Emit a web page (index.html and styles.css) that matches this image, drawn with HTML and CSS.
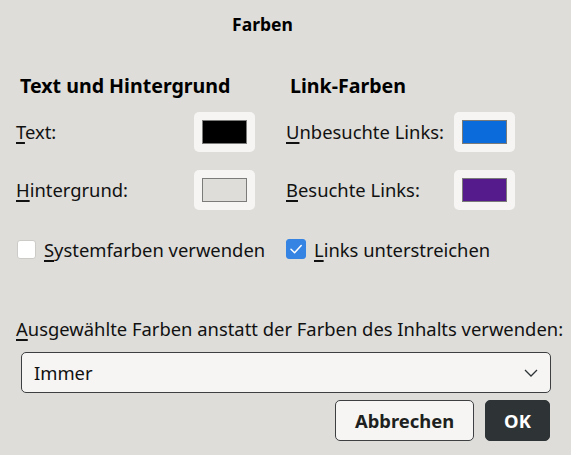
FILE: index.html
```html
<!DOCTYPE html>
<html lang="de">
<head>
<meta charset="utf-8">
<title>Farben</title>
<link rel="stylesheet" href="styles.css">
</head>
<body>
<div class="dialog">
  <header class="titlebar">Farben</header>

  <div class="columns">
    <section class="group group-left">
      <h2 class="group-title">Text und Hintergrund</h2>
      <div class="color-grid">
        <label class="row-label"><span class="mn">T</span>ext:</label>
        <button class="color-btn"><span class="swatch swatch-text"></span></button>
        <label class="row-label"><span class="mn">H</span>intergrund:</label>
        <button class="color-btn"><span class="swatch swatch-bg"></span></button>
      </div>
      <label class="check">
        <span class="check-box"></span>
        <span class="check-label"><span class="mn">S</span>ystemfarben verwenden</span>
      </label>
    </section>

    <section class="group group-right">
      <h2 class="group-title">Link-Farben</h2>
      <div class="color-grid">
        <label class="row-label"><span class="mn">U</span>nbesuchte Links:</label>
        <button class="color-btn"><span class="swatch swatch-link"></span></button>
        <label class="row-label"><span class="mn">B</span>esuchte Links:</label>
        <button class="color-btn"><span class="swatch swatch-visited"></span></button>
      </div>
      <label class="check">
        <span class="check-box checked">
          <svg viewBox="0 0 20 20" width="20" height="20"><path d="M5 10.2 L8.6 13.8 L15.2 6.6" fill="none" stroke="#fff" stroke-width="1.5" stroke-linecap="round" stroke-linejoin="round"/></svg>
        </span>
        <span class="check-label"><span class="mn">L</span>inks unterstreichen</span>
      </label>
    </section>
  </div>

  <div class="override">
    <div class="override-label"><span class="mn">A</span>usgewählte Farben anstatt der Farben des Inhalts verwenden:</div>
    <div class="select">
      <span>Immer</span>
      <svg class="chevron" viewBox="0 0 14 8" width="14" height="8"><path d="M1 1 L7 7 L13 1" fill="none" stroke="#2e3436" stroke-width="1.3"/></svg>
    </div>
  </div>

  <div class="actions">
    <button class="btn">Abbrechen</button>
    <button class="btn btn-default">OK</button>
  </div>
</div>
</body>
</html>
```

FILE: styles.css
```css
* { box-sizing: border-box; }

html, body {
  margin: 0;
  padding: 0;
}

body {
  width: 571px;
  height: 455px;
  overflow: hidden;
  background: #deddda;
  font-family: "Noto Sans", "Open Sans", sans-serif;
  font-size: 18.4px;
  color: #111;
}

.dialog {
  display: flex;
  flex-direction: column;
  height: 455px;
}

.dialog > * { flex-shrink: 0; }

.titlebar {
  height: 48px;
  display: flex;
  align-items: center;
  justify-content: center;
  padding-right: 46px;
  font-weight: 700;
  font-size: 17.5px;
  color: #000;
}

.columns {
  display: grid;
  grid-template-columns: 270px 1fr;
  padding-left: 16px;
  margin-top: 25px;
}

.group-title {
  margin: 0 0 14px 4px;
  font-size: 19.6px;
  font-weight: 700;
  line-height: 25px;
  color: #000;
  white-space: nowrap;
}

.color-grid {
  display: grid;
  row-gap: 18px;
  align-items: center;
}

.group-left .color-grid { grid-template-columns: 178px 61px; }
.group-right .color-grid { grid-template-columns: 168px 61px; }

.row-label {
  line-height: 24px;
  white-space: nowrap;
}

.mn {
  text-decoration: underline;
  text-decoration-thickness: 2px;
  text-underline-offset: 3px;
}

.color-btn {
  width: 61px;
  height: 40px;
  padding: 0;
  border: none;
  border-radius: 5px;
  background: #f6f5f4;
  display: flex;
  align-items: center;
  justify-content: center;
}

.swatch {
  display: block;
  width: 45px;
  height: 24px;
  border: 1px solid #7b7b79;
}
.swatch-text { background: #000; }
.swatch-bg { background: #deddda; }
.swatch-link { background: #0b6bdb; }
.swatch-visited { background: #551a8b; }

.check {
  display: flex;
  align-items: center;
  gap: 8px;
  margin-top: 29px;
  height: 20px;
  white-space: nowrap;
}

.check-box {
  width: 19px;
  height: 19px;
  margin-left: 1px;
  border: 1px solid #cdcbc8;
  border-radius: 3px;
  background: #fff;
  display: flex;
  align-items: center;
  justify-content: center;
}

.check-box.checked {
  width: 20px;
  height: 20px;
  margin-left: 0;
  background: #3584e4;
  border-color: #3584e4;
}

.check-box svg { flex: none; }

.override {
  padding: 0 9px 0 16px;
  margin-top: 58px;
}

.override-label {
  line-height: 24px;
  white-space: nowrap;
}

.select {
  margin: 11px 11px 0 5px;
  height: 41px;
  border: 1px solid #3d3f40;
  border-radius: 5px;
  background: #f6f5f4;
  display: flex;
  align-items: center;
  justify-content: space-between;
  padding: 0 12px 0 12px;
}

.chevron { margin-top: 1px; }

.actions {
  display: flex;
  justify-content: flex-end;
  gap: 11px;
  padding-right: 21px;
  margin-top: 7px;
}

.btn {
  height: 41px;
  border: 1px solid #3d3f40;
  border-radius: 5px;
  background: #f6f5f4;
  font: inherit;
  font-weight: 700;
  color: #1d1f20;
  padding: 0;
  width: 139px;
}

.btn-default {
  width: 65px;
  background: #2e3436;
  border-color: #2e3436;
  color: #fff;
}
```
